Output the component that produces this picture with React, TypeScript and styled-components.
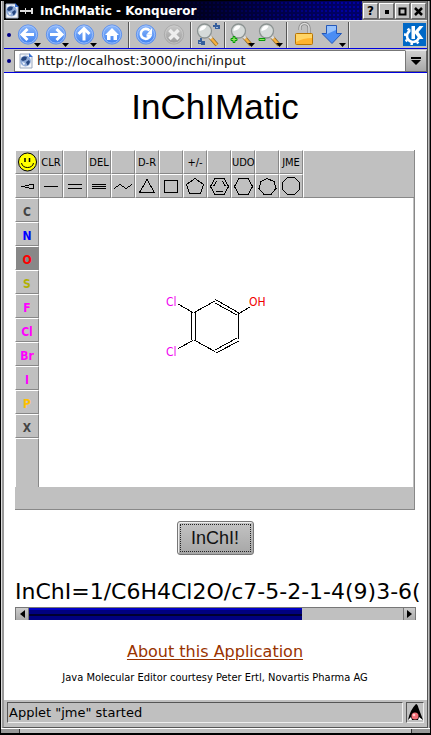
import React from "react";
import styled, { createGlobalStyle, css } from "styled-components";

const Global = createGlobalStyle`
  * { box-sizing: border-box; }
  body { margin: 0; background: #fff; font-family: "DejaVu Sans", sans-serif; color: #000; }
  button { font-family: inherit; padding: 0; margin: 0; border-radius: 0; }
  svg { display: block; flex: none; }
`;

const condensed = `"DejaVu Sans Condensed", "DejaVu Sans", sans-serif`;

const Window = styled.div`
  min-height: 100vh;
  display: flex;
  flex-direction: column;
  border: 1px solid #000;
  border-bottom-width: 2px;
  background: #c0c0c0;
`;
const Body = styled.div`
  flex: 1;
  display: flex;
  flex-direction: column;
  border-left: 1px solid #ddd;
  border-right: 1px solid #777;
  padding-right: 1px;
`;
const Inner = styled.div`
  flex: 1;
  display: flex;
  flex-direction: column;
  border-left: 2px solid #999;
  border-right: 1px solid #555;
  border-bottom: 1px solid #555;
`;
const TitleBar = styled.header`
  display: flex;
  align-items: center;
  height: 19px;
  background-color: #000066;
  background-image: linear-gradient(90deg, #000 30%, rgba(0, 0, 0, 0) 80%),
    radial-gradient(circle, #0000a0 1px, rgba(0, 0, 0, 0) 1px);
  background-size: auto, 4px 4px;
  color: #fff;
`;
const Title = styled.span`
  flex: 1;
  padding-left: 6px;
  font-weight: bold;
  font-size: 12px;
  line-height: 16px;
  white-space: nowrap;
`;
const TitleButtons = styled.div`
  display: flex;
  gap: 1px;
  padding: 2px 1px 0 1px;
  height: 19px;
  background: #777;
`;
const TitleButton = styled.button`
  width: 15px;
  height: 16px;
  border: 1px solid;
  border-color: #fff #666 #666 #fff;
  background: #c0c0c0;
  display: grid;
  place-items: center;
  font-weight: bold;
  font-size: 12px;
  line-height: 12px;
`;
const Bar = styled.div`
  display: flex;
  align-items: center;
  background: #c0c0c0;
  border-bottom: 1px solid #0000e0;
`;
const ToolBar = styled(Bar)`
  height: 29px;
  border-top: 1px solid #eee;
  padding-right: 1px;
`;
const LocationBar = styled(Bar)`
  height: 24px;
`;
const Handle = styled.span`
  width: 4px;
  height: 4px;
  margin: 0 3px;
  border-radius: 2px;
  background: #000088;
  flex: none;
`;
const Tool = styled.button`
  width: 28px;
  height: 26px;
  border: 0;
  background: none;
  display: grid;
  place-items: center;
`;
const Sep = styled.span`
  width: 2px;
  height: 26px;
  margin: 0 2px;
  background: #555;
  border-right: 1px solid #eee;
`;
const Spacer = styled.span`
  flex: 1;
`;
const UrlField = styled.label`
  flex: 1;
  min-width: 0;
  height: 22px;
  display: flex;
  align-items: center;
  gap: 3px;
  padding-left: 3px;
  background: #fff;
  border: 1px solid #777;
  border-right: 0;
`;
const UrlInput = styled.input`
  flex: 1;
  min-width: 0;
  border: 0;
  outline: 0;
  padding: 1px 0 0;
  background: none;
  font: 13px/18px "DejaVu Sans", sans-serif;
  color: #111;
`;
const DropButton = styled.button`
  width: 22px;
  height: 22px;
  border: 1px solid;
  border-color: #eee #666 #666 #777;
  background: linear-gradient(#d0d0d0, #a8a8a8);
  display: grid;
  place-items: center;
`;

const Page = styled.main`
  flex: 1;
  background: #fff;
  padding: 13px 12px 0 11px;
  display: flex;
  flex-direction: column;
  align-items: center;
`;
const Heading = styled.h1`
  margin: 0 0 22px;
  font: 35px/42px "Liberation Sans", sans-serif;
`;
const Applet = styled.section`
  align-self: stretch;
  height: 360px;
  display: flex;
  flex-direction: column;
  background: #c0c0c0;
  border-right: 1px solid #888;
  border-bottom: 1px solid #888;
`;
const CellRow = styled.div`
  display: flex;
`;
const bevel = css`
  border: 1px solid;
  border-color: #fff #888 #888 #fff;
`;
const Cell = styled.button<{ $active?: boolean; $color?: string }>`
  ${bevel}
  width: 24px;
  height: 24px;
  flex: none;
  display: grid;
  place-items: center;
  background: ${(p) => (p.$active ? "#888" : "#c0c0c0")};
  color: ${(p) => p.$color || "#000"};
  font-family: ${condensed};
  font-size: ${(p) => (p.$color ? "12px" : "11px")};
  font-weight: ${(p) => (p.$color ? "bold" : "normal")};
  padding-top: ${(p) => (p.$color ? "3px" : "0")};
`;
const Tools = styled.div`
  display: flex;
`;
const ToolsRest = styled.div`
  flex: 1;
  border: 1px solid #fff;
  border-right: 0;
  border-bottom-color: #888;
`;
const Work = styled.div`
  flex: 1;
  display: flex;
`;
const Atoms = styled.div`
  display: flex;
  flex-direction: column;
`;
const AtomsRest = styled.div`
  ${bevel}
  flex: 1;
  border-bottom: 0;
`;
const Canvas = styled.div`
  flex: 1;
  background: #fff;
  margin-right: 1px;
  padding: 92px 0 0 127px;
`;
const AppletStatus = styled.div`
  height: 22px;
`;
const Submit = styled.button`
  width: 77px;
  height: 34px;
  margin: 11px 0 24px;
  padding: 2px;
  border: 1px solid #777;
  border-radius: 3px;
  background: linear-gradient(#c4c4c4, #a6a6a6);
  box-shadow: inset 1px 1px 0 #eee;
  font: 18px/26px "Liberation Sans", sans-serif;
  color: #111;
`;
const Focus = styled.span`
  display: block;
  height: 28px;
  border: 1px dotted #222;
`;
const Scroller = styled.div`
  align-self: stretch;
  margin-right: -1px;
`;
const Result = styled.div`
  overflow: hidden;
  white-space: nowrap;
  font-size: 22px;
  line-height: 26px;
  margin: 0 -8px 2px 0;
`;
const ScrollBar = styled.div`
  display: grid;
  grid-template-columns: 14px 1fr 13px;
  height: 13px;
  background: #c0c0c0;
  border-top: 1px solid #777;
`;
const ScrollButton = styled.button`
  border: 1px solid #777;
  border-width: 0 1px;
  background: linear-gradient(#ccc, #aaa);
  display: grid;
  place-items: center;
`;
const Thumb = styled.div`
  width: 73%;
  background: linear-gradient(#0000c8 0 2px, #000080 2px 6px, #000030 6px 8px, #000080 8px);
`;
const About = styled.a`
  margin-top: 22px;
  font-size: 16px;
  line-height: 20px;
  color: #993300;
  text-decoration: underline;
  text-underline-offset: 2px;
`;
const Credit = styled.p`
  margin: 10px 0 16px;
  font: 11px/12px ${condensed};
  white-space: nowrap;
`;
const StatusBar = styled.footer`
  display: flex;
  gap: 3px;
  padding: 2px 3px 4px;
`;
const inset = css`
  border: 1px solid;
  border-color: #555 #eee #eee #555;
`;
const StatusText = styled.div`
  ${inset}
  flex: 1;
  height: 21px;
  padding-left: 1px;
  font-size: 13px;
  line-height: 19px;
`;
const StatusIcon = styled.div`
  ${inset}
  width: 18px;
  height: 21px;
`;
const Grip = styled.div`
  height: 5px;
  display: flex;
  justify-content: space-between;
  border-top: 1px solid #fff;
`;
const GripEnd = styled.span`
  width: 19px;
  background: #999;
  border: 0 solid #333;
  border-right-width: 1px;
  &:last-child { border-width: 0 0 0 1px; }
`;

const DocIcon = () => (
  <svg width="16" height="16" viewBox="0 0 16 16">
    <path d="M2 1h9l3 3v11H2z" fill="#f4f6fa" stroke="#9aa9c0" />
    <path d="M11 0l4 4h-4z" fill="#3a70d0" />
    <circle cx="7.5" cy="8" r="5.4" fill="#8fabd8" />
    <path d="M4 4.5q3-2 5 0l-1 2.5-3 1-2-1zM8 9l3-2 1 2-2 3.5-1-1z" fill="#24457f" />
    <path d="M4 9l3 1-1 2.500z" fill="#f2f6fd" />
  </svg>
);

const Pin = () => (
  <svg width="14" height="10" viewBox="0 0 14 10" shapeRendering="crispEdges">
    <path d="M0 4h5v2H0zM5 2h1v6H5zM6 4h5v2H6zM11 2h2v6h-2z" fill="#ddd" />
  </svg>
);

const Drop = ({ x = 20, y = 21 }: { x?: number; y?: number }) => (
  <path d={`M${x} ${y}h7l-3.5 4z`} fill="#000" />
);

const Round = ({ id, drop, grey, children }: { id: string; drop?: boolean; grey?: boolean; children: React.ReactNode }) => (
  <svg width="28" height="26" viewBox="0 0 28 26">
    <defs>
      <linearGradient id={id} x1="0" y1="0" x2="0" y2="1">
        <stop offset="0" stopColor={grey ? "#c9c9c9" : "#8db8fa"} />
        <stop offset="1" stopColor={grey ? "#999" : "#3c7ff0"} />
      </linearGradient>
    </defs>
    <circle cx="14" cy="12.500" r="9.6" fill={`url(#${id})`} stroke={grey ? "#aaa" : "#5c90ee"} />
    <circle cx="14" cy="12.500" r="8.6" fill="none" stroke={grey ? "#ccc" : "#a9c8fb"} strokeWidth=".8" />
    {children}
    {drop && <Drop />}
  </svg>
);

const Arrow = ({ id, turn }: { id: string; turn: number }) => (
  <Round id={id} drop>
    <path
      d="M13.500 7L8 12.500l5.500 5.500M8.500 12.500H20"
      transform={`rotate(${turn} 14 12.500)`}
      fill="none"
      stroke="#fff"
      strokeWidth="3"
    />
  </Round>
);

const Lens = ({ sign, find }: { sign?: "plus" | "minus"; find?: boolean }) => (
  <svg width="28" height="26" viewBox="0 0 28 26">
    {find && (
      <g fill="#365f9c">
        <path d="M19 3h2V1h2v2h3v4h-5V5h-2zM4 18h2v-2h2v3h3v4H7v-1H4z" />
        <path d="M5 20h2v1H5zM22 5h2v1h-2z" fill="#9ab8e4" />
      </g>
    )}
    <path d="M16 15l7 8" stroke="#8c6a2a" strokeWidth="4" />
    <path d="M16 15l7 8" stroke="#f5b040" strokeWidth="2.500" />
    <path d="M15 13.500l2.500 3" stroke="#ddd" strokeWidth="3" />
    <circle cx="10.500" cy="9" r="7" fill="#d5dad9" stroke="#8d9493" strokeWidth="1.300" />
    <path d="M5.500 9a5 5 0 0 1 7-5q-1 4-7 5z" fill="#fff" />
    {sign && (
      <path
        d={sign === "plus" ? "M5 14.500h2v2h2v2H7v2H5v-2H3v-2h2z" : "M3 16.500h6v2H3z"}
        fill="#8fe860"
        stroke="#0a9a0a"
        strokeWidth="1"
      />
    )}
    {sign && <Drop />}
  </svg>
);

const Lock = () => (
  <svg width="28" height="26" viewBox="0 0 28 26">
    <path d="M10 8V6a4.500 4.500 0 0 1 9 0v7" fill="none" stroke="#888" strokeWidth="3.200" />
    <path d="M10 8V6a4.500 4.500 0 0 1 9 0v7" fill="none" stroke="#ddd" strokeWidth="1.500" />
    <rect x="5.500" y="11.500" width="17" height="11" rx="1" fill="#ffb42e" stroke="#b87400" />
    <path d="M6 12h16v4q-9 0-16 4z" fill="#ffd566" />
  </svg>
);

const Download = () => (
  <svg width="28" height="26" viewBox="0 0 28 26">
    <path d="M8.500 3.500h10v8h5L14 21.500 4 11.500h4.500z" fill="#4a8df4" stroke="#2458b8" />
    <path d="M9 4h9v4l-9 4z" fill="#97c2fc" />
    <Drop x={21} />
  </svg>
);

const KdeLogo = () => (
  <svg width="23" height="23" viewBox="0 0 23 23">
    <rect width="23" height="23" fill="#0068c6" />
    <circle cx="10" cy="13" r="6" fill="none" stroke="#fff" strokeWidth="2.600" />
    <circle cx="10" cy="13" r="8" fill="none" stroke="#fff" strokeWidth="2.200" strokeDasharray="2.500 3.780" />
    <path d="M7.500 1H22v14.500H17L15 13.500 13 16.500H7.500z" fill="#0068c6" />
    <path d="M8.500 3h3.500v5l4.500-5h4L15.500 9l5 7h-4.300L12 10.500V16H8.500z" fill="#fff" />
  </svg>
);

const Glyph = ({ d }: { d: string }) => (
  <svg width="22" height="22" viewBox="0 0 22 22" shapeRendering="crispEdges">
    <path d={d} fill="none" stroke="#000" />
  </svg>
);

const Smiley = () => (
  <svg width="22" height="22" viewBox="0 0 22 22">
    <circle cx="11.500" cy="11" r="9" fill="#ff0" stroke="#000" />
    <path d="M9 7v4M13.500 7v4" stroke="#000" strokeWidth="1.500" />
    <path d="M5.500 12q1 4.500 6 4.500t6-4.500" fill="none" stroke="#000" />
  </svg>
);

const Duke = () => (
  <svg width="16" height="18" viewBox="0 0 16 18">
    <path d="M9 1q1.500 0 2.500 4L16 17H1Q3 7 9 1z" fill="#000" />
    <path d="M1 17l3-3 1 3zM16 17l-4-3-1 3z" fill="#fff" />
    <circle cx="8" cy="13" r="3.500" fill="#f07078" />
    <circle cx="7" cy="12" r="1.300" fill="#fcc" />
  </svg>
);

const Molecule = () => (
  <svg width="104" height="72" viewBox="0 0 104 72" role="img" aria-label="3,4-dichlorophenol">
    <path
      shapeRendering="crispEdges"
      fill="none"
      stroke="#000"
      d="M25.500 22v28M29.500 22v28M28 22.500L49 11M49.500 9.500L73 23M49 13l22 12M72.500 24v25M71 48L49 60M73 51L50 63M28 50l21 11.500M12 14l15 8.500M12 58.500l15-8M72 24l12-7"
    />
    <g fontFamily='"DejaVu Sans Condensed", "DejaVu Sans", sans-serif' fontSize="12">
      <text x="0" y="16" fill="#f000f0">Cl</text>
      <text x="0" y="66" fill="#f000f0">Cl</text>
      <text x="83" y="16" fill="#f00000">OH</text>
    </g>
  </svg>
);

const commands = ["smile", "CLR", "", "DEL", "", "D-R", "", "+/-", "", "UDO", "", "JME"];
const shapes: [string, string][] = [
  ["Stereo bond", "M5 11.500h4M9 10.500h4M9 12.500h4M13 9.500h4.500v4H13"],
  ["Single bond", "M4 11.500h14"],
  ["Double bond", "M4 9.500h14M4 13.500h14"],
  ["Triple bond", "M4 9.500h14M4 11.500h14M4 13.500h14"],
  ["Chain", "M2 13.500l6-4 6 4 6-4"],
  ["Three ring", "M11 4.500L3.500 17.500h15z"],
  ["Four ring", "M4.500 5.500h13v12h-13z"],
  ["Five ring", "M11 3.500l8.500 6-3 9h-11l-3-9z"],
  ["Benzene", "M7 3.500h9l4.500 8-4.500 8H7l-4.500-8zM8.500 6L5.500 11.500M14.500 6l3 5.500M8 16.500h7"],
  ["Six ring", "M7 3.500h9l4.500 8-4.500 8H7l-4.500-8z"],
  ["Seven ring", "M11 3.500l7 3 2 7-5 6H8l-5-6 2-7z"],
  ["Eight ring", "M7.500 2.500h7l5 5v7l-5 5h-7l-5-5v-7z"],
];
const atoms: [string, string][] = [
  ["C", "#444"],
  ["N", "#0000ff"],
  ["O", "#ff0000"],
  ["S", "#b0b000"],
  ["F", "#ff00ff"],
  ["Cl", "#ff00ff"],
  ["Br", "#ff00ff"],
  ["I", "#ff00ff"],
  ["P", "#ffc000"],
  ["X", "#444"],
];

const WinGlyph = ({ kind }: { kind: "dot" | "box" | "close" }) => (
  <svg width="9" height="9" viewBox="0 0 9 9">
    {kind === "dot" && <path d="M3 3h4v4H3z" />}
    {kind === "box" && <path d="M1.500 1.500h6v6h-6z" fill="none" stroke="#000" strokeWidth="2" />}
    {kind === "close" && <path d="M1 1l7 7M8 1L1 8" stroke="#000" strokeWidth="2.500" />}
  </svg>
);

export default function App() {
  return (
    <>
      <Global />
      <Window>
        <Body>
          <Inner>
            <TitleBar>
              <DocIcon />
              <Pin />
              <Title>InChIMatic - Konqueror</Title>
              <TitleButtons>
                <TitleButton aria-label="Help">?</TitleButton>
                <TitleButton aria-label="Minimize"><WinGlyph kind="dot" /></TitleButton>
                <TitleButton aria-label="Maximize"><WinGlyph kind="box" /></TitleButton>
                <TitleButton aria-label="Close"><WinGlyph kind="close" /></TitleButton>
              </TitleButtons>
            </TitleBar>
            <ToolBar>
              <Handle />
              <Tool aria-label="Back"><Arrow id="back" turn={0} /></Tool>
              <Tool aria-label="Forward"><Arrow id="forward" turn={180} /></Tool>
              <Tool aria-label="Up"><Arrow id="up" turn={90} /></Tool>
              <Tool aria-label="Home">
                <Round id="home">
                  <path d="M14 6l7 7h-2v5h-3.500v-4h-3v4H9v-5H7z" fill="#fff" />
                </Round>
              </Tool>
              <Sep />
              <Tool aria-label="Reload">
                <Round id="reload">
                  <path d="M17.500 8.500a5 5 0 1 0 1 5h-4" fill="none" stroke="#fff" strokeWidth="2.600" />
                  <path d="M20 6v6h-5z" fill="#fff" />
                </Round>
              </Tool>
              <Tool aria-label="Stop">
                <Round id="stop" grey>
                  <path d="M9.500 8l9 9M18.500 8l-9 9" stroke="#eee" strokeWidth="3.500" />
                </Round>
              </Tool>
              <Sep />
              <Tool aria-label="Find"><Lens find /></Tool>
              <Sep />
              <Tool aria-label="Zoom in"><Lens sign="plus" /></Tool>
              <Tool aria-label="Zoom out"><Lens sign="minus" /></Tool>
              <Sep />
              <Tool aria-label="Security"><Lock /></Tool>
              <Tool aria-label="Download"><Download /></Tool>
              <Sep />
              <Spacer />
              <KdeLogo />
            </ToolBar>
            <LocationBar>
              <Handle />
              <UrlField>
                <DocIcon />
                <UrlInput aria-label="Location" defaultValue="http://localhost:3000/inchi/input" />
              </UrlField>
              <DropButton aria-label="Location history">
                <svg width="10" height="8" viewBox="0 0 10 8">
                  <path d="M0 0h10v2H0zM0 3h10L5 8z" />
                </svg>
              </DropButton>
            </LocationBar>

            <Page>
              <Heading>InChIMatic</Heading>
              <Applet aria-label="Molecule editor">
                <Tools>
                  <div>
                    <CellRow>
                      {commands.map((c, i) => (
                        <Cell key={i} aria-label={c || "Empty"}>{c === "smile" ? <Smiley /> : c}</Cell>
                      ))}
                    </CellRow>
                    <CellRow>
                      {shapes.map(([name, d]) => (
                        <Cell key={name} aria-label={name}><Glyph d={d} /></Cell>
                      ))}
                    </CellRow>
                  </div>
                  <ToolsRest />
                </Tools>
                <Work>
                  <Atoms>
                    {atoms.map(([name, color]) => (
                      <Cell key={name} $color={color} $active={name === "O"}>{name}</Cell>
                    ))}
                    <AtomsRest />
                  </Atoms>
                  <Canvas><Molecule /></Canvas>
                </Work>
                <AppletStatus />
              </Applet>
              <Submit><Focus>InChI!</Focus></Submit>
              <Scroller>
                <Result>InChI=1/C6H4Cl2O/c7-5-2-1-4(9)3-6(</Result>
                <ScrollBar>
                  <ScrollButton aria-label="Scroll left">
                    <svg width="5" height="8" viewBox="0 0 5 8"><path d="M5 0v8L0 4z" /></svg>
                  </ScrollButton>
                  <Thumb />
                  <ScrollButton aria-label="Scroll right">
                    <svg width="5" height="8" viewBox="0 0 5 8"><path d="M0 0v8l5-4z" /></svg>
                  </ScrollButton>
                </ScrollBar>
              </Scroller>
              <About href="#about">About this Application</About>
              <Credit>Java Molecular Editor courtesy Peter Ertl, Novartis Pharma AG</Credit>
            </Page>
            <StatusBar>
              <StatusText>Applet "jme" started</StatusText>
              <StatusIcon><Duke /></StatusIcon>
            </StatusBar>
          </Inner>
        </Body>
        <Grip><GripEnd /><GripEnd /></Grip>
      </Window>
    </>
  );
}
